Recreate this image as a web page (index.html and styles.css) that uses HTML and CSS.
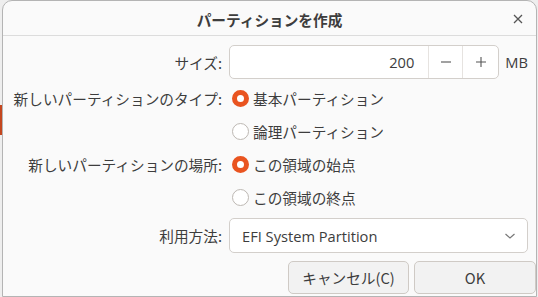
FILE: index.html
```html
<!DOCTYPE html>
<html lang="ja">
  <head>
    <meta charset="UTF-8" />
    <title>パーティションを作成</title>
    <link rel="stylesheet" href="styles.css">
  </head>
  <body>
    <div class="window">
      <div class="titlebar">
        <span class="title">パーティションを作成</span>
        <span class="close">
          <svg width="10" height="10" viewBox="0 0 10 10"><path d="M1 1L9 9M9 1L1 9" stroke="#555" stroke-width="1.3" fill="none"/></svg>
        </span>
      </div>

      <div class="form">
        <label class="label">サイズ:</label>
        <div class="size-ctrl">
          <div class="spin">
            <span class="spin-value">200</span>
            <span class="spin-btn">
              <svg width="12" height="12" viewBox="0 0 12 12"><path d="M1 6H11" stroke="#555" stroke-width="1.1"/></svg>
            </span>
            <span class="spin-btn plus">
              <svg width="12" height="12" viewBox="0 0 12 12"><path d="M1 6H11M6 1V11" stroke="#555" stroke-width="1.1"/></svg>
            </span>
          </div>
          <span class="unit">MB</span>
        </div>

        <label class="label">新しいパーティションのタイプ:</label>
        <div class="radio"><span class="dot on"></span>基本パーティション</div>
        <span></span>
        <div class="radio"><span class="dot"></span>論理パーティション</div>

        <label class="label">新しいパーティションの場所:</label>
        <div class="radio"><span class="dot on"></span>この領域の始点</div>
        <span></span>
        <div class="radio"><span class="dot"></span>この領域の終点</div>

        <label class="label">利用方法:</label>
        <div class="combo">
          <span class="latin">EFI System Partition</span>
          <svg width="12" height="8" viewBox="0 0 12 8"><path d="M1.5 2L6 6L10.5 2" stroke="#777" stroke-width="1.2" fill="none"/></svg>
        </div>
      </div>

      <div class="actions">
        <button class="btn cancel">キャンセル(C)</button>
        <button class="btn ok">OK</button>
      </div>
    </div>
  </body>
</html>
```

FILE: styles.css
```css
* {
  padding: 0px;
  margin: 0px;
  box-sizing: border-box;
}
body {
  width: 538px;
  height: 297px;
  overflow: hidden;
  background: linear-gradient(#c4471f, #c4471f) 0 105px / 2px 30px no-repeat, #eeeeee;
  font-family: "Noto Sans CJK JP", "Noto Sans", sans-serif;
  font-size: 14.67px;
  color: #3d3d3d;
}
.window {
  margin-left: 2px;
  width: 535px;
  height: 297px;
  background: #fafafa;
  border: 1px solid #b4b4b4;
  border-radius: 10px 10px 0 0;
  display: flex;
  flex-direction: column;
}
.titlebar {
  height: 35px;
  flex-shrink: 0;
  border-bottom: 1px solid #dcdcdc;
  position: relative;
  display: flex;
  align-items: center;
  justify-content: center;
  padding-top: 3px;
}
.title {
  font-weight: bold;
}
.close {
  position: absolute;
  right: 13px;
  top: 13px;
  width: 10px;
  height: 10px;
  display: flex;
}

/* rows: size | radio x4 | combo */
.form {
  display: grid;
  grid-template-columns: 219px 299px;
  grid-template-rows: 34px 36px 33px 33px 33px 39px;
  column-gap: 7px;
  padding-top: 9px;
}
.label,
.radio {
  height: 33px;
  align-self: end;
  display: flex;
  align-items: center;
  white-space: nowrap;
}
.label {
  justify-content: flex-end;
}
.form > .label:first-child {
  height: 34px;
}
.form > .label:nth-last-of-type(1) {
  height: 35px;
}

.size-ctrl {
  display: flex;
  align-items: center;
}
.spin {
  width: 272px;
  height: 34px;
  background: #ffffff;
  border: 1px solid #d3cfcb;
  border-radius: 5px;
  display: flex;
}
.spin-value {
  flex: 1;
  text-align: right;
  padding-right: 14px;
  line-height: 32px;
  font-family: "Open Sans", "Noto Sans", sans-serif;
}
.spin-btn {
  width: 34px;
  border-left: 1px solid #e6e3e0;
  display: flex;
  align-items: center;
  justify-content: center;
}
.spin-btn.plus {
  width: 36px;
}
.unit {
  margin-left: 6px;
  font-family: "Open Sans", "Noto Sans", sans-serif;
}

.radio {
  padding-left: 3px;
}
.dot {
  width: 17px;
  height: 17px;
  border-radius: 50%;
  border: 1px solid #bdb8b3;
  background: #ffffff;
  margin-right: 4px;
  flex-shrink: 0;
}
.dot.on {
  border: 5.5px solid #e95420;
  background: #ffffff;
}

.combo {
  align-self: end;
  height: 35px;
  background: #ffffff;
  border: 1px solid #d3cfcb;
  border-radius: 5px;
  display: flex;
  align-items: center;
  justify-content: space-between;
  padding: 0 11px 0 12px;
}
.latin {
  font-family: "Open Sans", "Noto Sans", sans-serif;
}

.actions {
  display: flex;
  justify-content: flex-end;
  gap: 5px;
  margin-top: 8px;
}
.btn {
  height: 33px;
  background: #f2f2f2;
  border: 1px solid #cfcac5;
  border-radius: 5px;
  font-family: "Noto Sans CJK JP", "Open Sans", sans-serif;
  font-size: 14.67px;
  color: #3d3d3d;
}
.cancel {
  width: 121px;
}
.ok {
  width: 122px;
}
```
